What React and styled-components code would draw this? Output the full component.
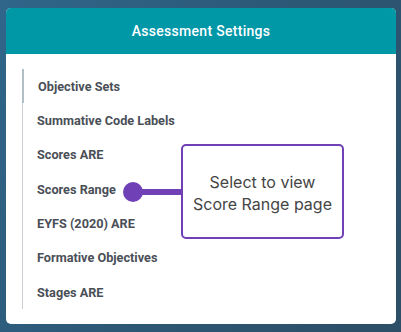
import styled, { createGlobalStyle } from 'styled-components';

const GlobalStyle = createGlobalStyle`
  html, body {
    margin: 0;
    padding: 0;
  }
  body {
    width: 401px;
    height: 332px;
    overflow: hidden;
    background: linear-gradient(120deg, #30668a 0%, #2c5876 50%, #2d4e66 100%);
    font-family: Roboto, "Liberation Sans", sans-serif;
  }
`;

const items = [
  'Objective Sets',
  'Summative Code Labels',
  'Scores ARE',
  'Scores Range',
  'EYFS (2020) ARE',
  'Formative Objectives',
  'Stages ARE',
];

const Page = styled.div`
  padding: 8px 5px 8px 6px;
`;

const Card = styled.div`
  position: relative;
  width: 390px;
  height: 316px;
  background: #fff;
  border-radius: 5px;
  overflow: hidden;
`;

const Header = styled.div`
  height: 46px;
  background: #0097a7;
  color: #fff;
  display: flex;
  align-items: center;
  justify-content: center;
  font-size: 14px;
  font-weight: 500;
  letter-spacing: 0.3px;
`;

const Body = styled.div`
  padding: 15px 16px;
`;

const List = styled.ul`
  list-style: none;
  margin: 0;
  padding: 0;
  border-left: 1px solid #c9cdd1;
`;

const Item = styled.li`
  position: relative;
  height: 34.33px;
  display: flex;
  align-items: center;
  padding-left: ${p => (p.$active ? 15 : 14)}px;
  font-size: 12.7px;
  font-weight: 700;
  color: #4a4f57;

  &::before {
    content: '';
    display: ${p => (p.$active ? 'block' : 'none')};
    position: absolute;
    left: -1px;
    top: 0;
    bottom: 0;
    width: 2px;
    background: #b0bec5;
  }
`;

const Annotation = styled.div`
  position: absolute;
  left: 117px;
  top: 136px;
  display: flex;
  align-items: center;
`;

const Dot = styled.div`
  width: 20px;
  height: 20px;
  border-radius: 50%;
  background: #7040b6;
`;

const Connector = styled.div`
  width: 40px;
  height: 6px;
  margin-left: -2px;
  background: #7040b6;
`;

const Callout = styled.div`
  width: 159px;
  height: 89px;
  border: 2px solid #7040b6;
  border-radius: 5px;
  background: #fff;
  display: flex;
  align-items: center;
  justify-content: center;
  text-align: center;
  font-family: Inter, Roboto, sans-serif;
  font-size: 16px;
  line-height: 22px;
  color: #454545;
  padding-top: 2px;
  box-sizing: content-box;
`;

export default function App() {
  return (
    <>
      <GlobalStyle />
      <Page>
        <Card>
          <Header>Assessment Settings</Header>
          <Body>
            <List>
              {items.map((label, i) => (
                <Item key={label} $active={i === 0}>{label}</Item>
              ))}
            </List>
          </Body>
          <Annotation>
            <Dot />
            <Connector />
            <Callout>
              Select to view
              <br />
              Score Range page
            </Callout>
          </Annotation>
        </Card>
      </Page>
    </>
  );
}
